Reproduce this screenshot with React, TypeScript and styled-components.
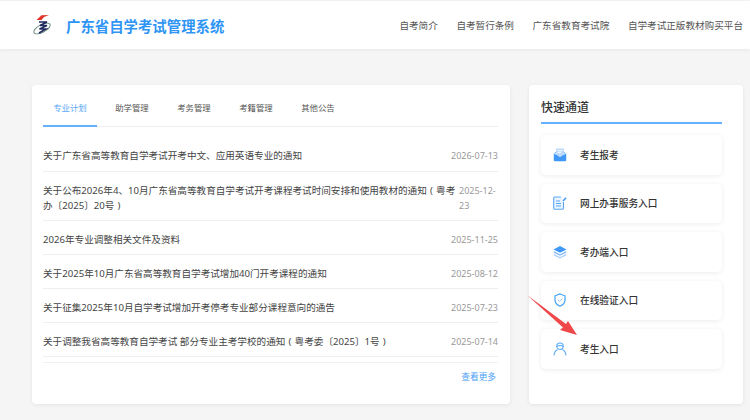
import React from "react";
import styled, { createGlobalStyle } from "styled-components";

const Global = createGlobalStyle`
  html, body { margin: 0; padding: 0; width: 750px; height: 420px; overflow: hidden; background: #f5f5f5; }
  body { font-family: "Noto Sans", "Noto Sans CJK SC", sans-serif; }
  * { box-sizing: border-box; }
`;

const Page = styled.div`
  position: relative;
  width: 750px;
  height: 420px;
  padding-top: 1px;
  overflow: hidden;
`;

const Header = styled.header`
  display: flex;
  align-items: center;
  height: 48px;
  padding-left: 33px;
  background: #fff;
  box-shadow: 0 1px 4px rgba(0, 0, 0, 0.06);
`;

const Brand = styled.div`
  font-size: 14.4px;
  font-weight: 700;
  color: #2f95f5;
  margin-left: 15px;
  white-space: nowrap;
`;

const Nav = styled.nav`
  display: flex;
  gap: 18.6px;
  margin-left: auto;
  margin-right: 7px;
  white-space: nowrap;
`;

const NavLink = styled.a`
  font-size: 9.6px;
  color: #555;
`;

const Main = styled.main`
  display: flex;
  gap: 19px;
  height: 319px;
  margin: 36px 7px 0 32px;
`;

const Card = styled.section`
  background: #fff;
  border-radius: 4px;
  box-shadow: 0 1px 4px rgba(0, 0, 0, 0.07);
`;

const NewsCard = styled(Card)`
  width: 478px;
  padding: 0 12px 0 11px;
`;

const Tabs = styled.div`
  display: flex;
  gap: 8px;
  height: 42px;
  border-bottom: 1px solid #eee;
`;

const Tab = styled.a<{ $active?: boolean }>`
  display: flex;
  align-items: center;
  justify-content: center;
  width: 54px;
  height: 42px;
  padding-top: 4px;
  font-size: 8.4px;
  color: ${(p) => (p.$active ? "#5aa9f7" : "#555")};
  border-bottom: 2px solid ${(p) => (p.$active ? "#66b1ff" : "transparent")};
`;

const List = styled.ul`
  list-style: none;
  margin: 11px 0 0;
  padding: 0 0 5px;
  border-bottom: 1px solid #f2f2f2;
`;

const Row = styled.li`
  display: flex;
  align-items: center;
  gap: 2px;
  padding: 11px 0 7px;
  border-bottom: 1px solid #eee;
  &:first-child { padding: 10px 0 8px; }
`;

const RowTitle = styled.a`
  flex: 1;
  min-width: 0;
  font-size: 9.6px;
  line-height: 15px;
  color: #444;
`;

const RowDate = styled.span<{ $narrow?: boolean }>`
  flex: none;
  width: ${(p) => (p.$narrow ? "39px" : "auto")};
  font-size: 9px;
  line-height: 15px;
  color: #999;
`;

const More = styled.a`
  display: block;
  margin-top: 8px;
  font-size: 8.7px;
  line-height: 12px;
  text-align: right;
  color: #4a9ef5;
  padding-right: 2px;
`;

const SideCard = styled(Card)`
  width: 214px;
  padding: 0 21px 0 12px;
`;

const SideTitle = styled.h2`
  display: flex;
  align-items: center;
  height: 39px;
  margin: 0;
  padding-top: 6px;
  font-size: 12px;
  font-weight: 500;
  color: #333;
  border-bottom: 2px solid #66b1ff;
`;

const Links = styled.div`
  display: flex;
  flex-direction: column;
  gap: 9px;
  margin-top: 11px;
`;

const LinkItem = styled.a`
  display: flex;
  align-items: center;
  gap: 13px;
  height: 39.5px;
  padding-left: 12px;
  background: #fff;
  border-radius: 5px;
  box-shadow: 0 1px 5px rgba(0, 0, 0, 0.08);
  font-size: 9.7px;
  font-weight: 500;
  color: #333;
`;

const IconBox = styled.svg`
  flex: none;
  width: 14px;
  height: 14px;
`;

const ArrowOverlay = styled.svg`
  position: absolute;
  left: 526px;
  top: 293px;
  width: 52px;
  height: 44px;
`;

const LogoMark = styled.svg`
  flex: none;
  width: 18px;
  height: 22px;
`;

const Logo = () => (
  <LogoMark viewBox="0 0 18 22">
    <path d="M3.5 6 L8.5 1.2 L16 1 L11 3 L8.5 6 Z" fill="#e23325" />
    <ellipse cx="9" cy="14.5" rx="9" ry="3.8" fill="none" stroke="#5f8574" strokeWidth="0.9" transform="rotate(-28 9 14.5)" />
    <path d="M6 8 H14 L7 11.5 H14 L6.5 15 H13 L6 19" fill="none" stroke="#1f2a5c" strokeWidth="1.5" />
  </LogoMark>
);

const MailIcon = () => (
  <IconBox viewBox="0 0 14 14">
    <path d="M0.8 5.5 L3 3.8 H11 L13.2 5.5 Z" fill="#7db9f9" />
    <rect x="3" y="0.5" width="8" height="8" rx="1" fill="#b9d9fc" />
    <rect x="4.5" y="2.2" width="5" height="1" fill="#fff" />
    <rect x="4.5" y="4.2" width="3.5" height="1" fill="#fff" />
    <path d="M0.8 5.5 L7 9 L13.2 5.5 V12.2 Q13.2 13.2 12.2 13.2 H1.8 Q0.8 13.2 0.8 12.2 Z" fill="#3f97f7" />
  </IconBox>
);

const NoteIcon = () => (
  <IconBox viewBox="0 0 14 14">
    <path d="M10.5 6 V12 Q10.5 13.3 9.2 13.3 H2 Q0.7 13.3 0.7 12 V2.2 Q0.7 1 2 1 H8" fill="#eaf4ff" stroke="#5aa9f7" strokeWidth="1.1" />
    <path d="M3 5 H7 M3 7.5 H8 M3 10 H8" stroke="#5aa9f7" strokeWidth="1" />
    <path d="M9.5 4.5 L12.5 1.2 L13.6 2.2 L10.6 5.4 Z" fill="#3f97f7" />
  </IconBox>
);

const LayersIcon = () => (
  <IconBox viewBox="0 0 14 14">
    <path d="M7 1 L13.5 4.4 L7 7.8 L0.5 4.4 Z" fill="#3f97f7" />
    <path d="M0.8 6.8 L7 10 L13.2 6.8" fill="none" stroke="#7db9f9" strokeWidth="1.4" />
    <path d="M0.8 9.6 L7 12.8 L13.2 9.6" fill="none" stroke="#a9d0fb" strokeWidth="1.4" />
  </IconBox>
);

const ShieldIcon = () => (
  <IconBox viewBox="0 0 14 14">
    <path d="M7 1 L12 2.8 V7 Q12 11 7 13.2 Q2 11 2 7 V2.8 Z" fill="none" stroke="#3fa2f5" strokeWidth="1.2" />
    <path d="M4.8 6.8 L6.5 8.4 L9.4 5.6" fill="none" stroke="#8cc6f9" strokeWidth="1" />
  </IconBox>
);

const PersonIcon = () => (
  <IconBox viewBox="0 0 14 14">
    <circle cx="7" cy="4.2" r="3.2" fill="none" stroke="#5aa9f7" strokeWidth="1.1" />
    <path d="M3.8 4.4 Q7 2.6 10.2 4.4" fill="none" stroke="#5aa9f7" strokeWidth="1.1" />
    <path d="M1 13.4 Q1.6 9 4.6 7.6 M13 13.4 Q12.4 9 9.4 7.6" fill="none" stroke="#5aa9f7" strokeWidth="1.1" />
  </IconBox>
);

const navItems = ["自考简介", "自考暂行条例", "广东省教育考试院", "自学考试正版教材购买平台"];
const tabs = ["专业计划", "助学管理", "考务管理", "考籍管理", "其他公告"];
const news: { title: string; date: string; narrow?: boolean }[] = [
  { title: "关于广东省高等教育自学考试开考中文、应用英语专业的通知", date: "2026-07-13" },
  {
    title: "关于公布2026年4、10月广东省高等教育自学考试开考课程考试时间安排和使用教材的通知\u2004(\u2004粤考办〔2025〕20号\u2004)",
    date: "2025-12-23",
    narrow: true,
  },
  { title: "2026年专业调整相关文件及资料", date: "2025-11-25" },
  { title: "关于2025年10月广东省高等教育自学考试增加40门开考课程的通知", date: "2025-08-12" },
  { title: "关于征集2025年10月自学考试增加开考停考专业部分课程意向的通告", date: "2025-07-23" },
  {
    title: "关于调整我省高等教育自学考试 部分专业主考学校的通知\u2004(\u2004粤考委〔2025〕1号\u2004)",
    date: "2025-07-14",
  },
];
const links = [
  { label: "考生报考", Icon: MailIcon },
  { label: "网上办事服务入口", Icon: NoteIcon },
  { label: "考办端入口", Icon: LayersIcon },
  { label: "在线验证入口", Icon: ShieldIcon },
  { label: "考生入口", Icon: PersonIcon },
];

export default function App() {
  return (
    <Page>
      <Global />
      <Header>
        <Logo />
        <Brand>广东省自学考试管理系统</Brand>
        <Nav>
          {navItems.map((n) => (
            <NavLink key={n}>{n}</NavLink>
          ))}
        </Nav>
      </Header>
      <Main>
        <NewsCard>
          <Tabs>
            {tabs.map((t, i) => (
              <Tab key={t} $active={i === 0}>{t}</Tab>
            ))}
          </Tabs>
          <List>
            {news.map((n) => (
              <Row key={n.date}>
                <RowTitle>{n.title}</RowTitle>
                <RowDate $narrow={n.narrow}>{n.date}</RowDate>
              </Row>
            ))}
          </List>
          <More>查看更多</More>
        </NewsCard>
        <SideCard>
          <SideTitle>快速通道</SideTitle>
          <Links>
            {links.map(({ label, Icon }) => (
              <LinkItem key={label}>
                <Icon />
                {label}
              </LinkItem>
            ))}
          </Links>
        </SideCard>
      </Main>
      <ArrowOverlay viewBox="0 0 52 44">
        <path d="M1 2 L40 31 L42 28 L51 42 L34 37 L37 34.5 Z" fill="#f0474a" />
      </ArrowOverlay>
    </Page>
  );
}
